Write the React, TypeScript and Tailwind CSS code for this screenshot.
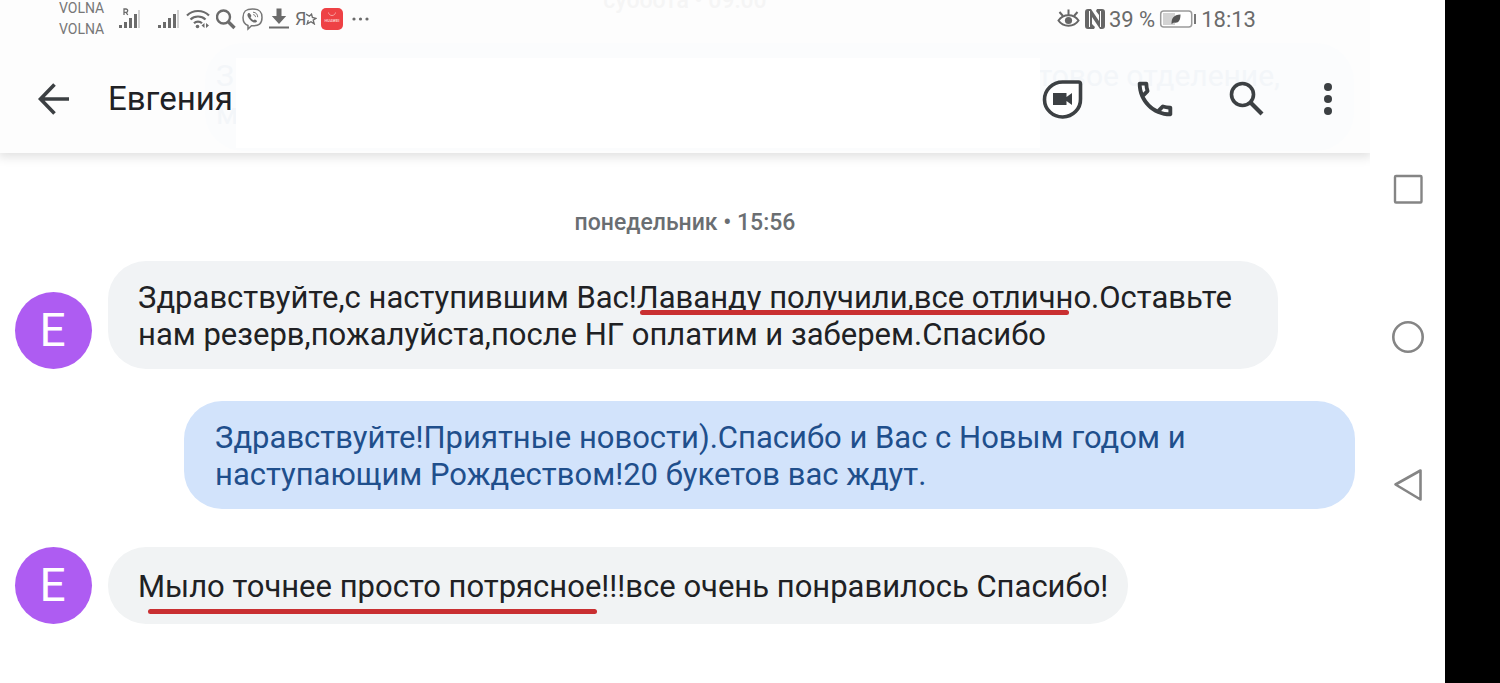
import type { ReactNode } from 'react';

function Signal({ roaming }: { roaming?: boolean }) {
  return (
    <svg className="h-6 w-[22px] shrink-0" viewBox="0 0 22 24" fill="#6b6b6b">
      <path d="M0 18h3v3H0zM5 15h3v6H5zM10 11h3v10h-3zM15 7h3v14h-3z" />
      <path d="M19 3h2v18h-2z" fill="#d2d2d2" />
      {roaming && <path d="M5 8V2h2a1.600 1.600 0 0 1 0 3.400H5M7 5.400L8.800 8" fill="none" stroke="#6b6b6b" strokeWidth="1.300" />}
    </svg>
  );
}

function Avatar() {
  return (
    <div className="flex size-[77px] shrink-0 items-center justify-center rounded-full bg-[#ae5cf2] pr-[2px] text-[46px] font-normal text-white">
      Е
    </div>
  );
}

function Marked({ children, line }: { children: ReactNode; line: string }) {
  return (
    <mark className="relative bg-transparent text-inherit">
      {children}
      <span className={`absolute h-[5px] rounded-full bg-[#c92f31] ${line}`} />
    </mark>
  );
}

function StatusBar() {
  return (
    <div className="flex h-[38px] items-center justify-between pr-[114px] pl-[59px] text-[#6b6b6b]">
      <div className="flex items-center gap-[6px]">
        <div className="w-[54px] text-sm leading-[21px] text-[#777]">
          <p>VOLNA</p>
          <p>VOLNA</p>
        </div>
        <div className="w-[33px]">
          <Signal roaming />
        </div>
        <Signal />
        <svg className="h-6 w-6" viewBox="0 0 24 24" fill="none" stroke="#6b6b6b" strokeWidth="2.200">
          <path d="M1 8.500C7 2.500 17 2.500 23 8.500M4.500 12.500c4-4 11-4 15 0M8 16.300c2.200-2.200 5.800-2.200 8 0" />
          <circle cx="11.500" cy="19.500" r="1.800" fill="#6b6b6b" stroke="none" />
          <path d="M18.500 16v5l-3-2.500zM20 16v5l3-2.500z" fill="#6b6b6b" stroke="none" />
        </svg>
        <svg className="h-6 w-5" viewBox="0 0 20 24" fill="none" stroke="#6b6b6b">
          <circle cx="7.500" cy="10" r="6.500" strokeWidth="2.400" />
          <path d="M12.500 15l6 6" strokeWidth="3.400" />
        </svg>
        <svg className="h-6 w-[21px]" viewBox="0 0 21 24" fill="none" stroke="#777" strokeWidth="1.500">
          <path d="M10.500 2C3.500 2 1 4.500 1 10.500c0 4.500 1.500 7 5 8V22l3.500-3.200c7.500.2 10.500-2 10.500-8.300C20 4.500 17.500 2 10.500 2z" />
          <path d="M6 6.500c-1.500 1.500 0 4 2 6.200s4.800 3.800 6.500 2.300c.8-.8.500-1.200-.2-1.800-1.300-1-1.700-.9-2.600 0-1.300-.3-2.700-1.800-3.100-3 .9-.9 1-1.300.1-2.600C7.900 6.300 6.900 5.600 6 6.500z" fill="#6b6b6b" stroke="none" />
          <path d="M11 5.200c3 .2 4.600 2 4.700 5M11.200 7.600c1.500.2 2.200 1 2.300 2.500" strokeWidth="1" />
        </svg>
        <svg className="h-6 w-5" viewBox="0 0 20 24" fill="#6b6b6b">
          <path d="M7.500 1.500h5v7.500h4.700L10 17 2.800 9h4.700zM0 19.500h20v2H0z" />
        </svg>
        <div className="flex w-5 items-center">
          <span className="text-lg leading-6">Я</span>
          <svg className="-ml-px size-3 shrink-0" viewBox="0 0 11 11" fill="none" stroke="#6b6b6b" strokeWidth="1.200">
            <path d="M1 1l3 2 2-2 .8 3L10 5 7.500 6.500 8.500 10 5.500 8 2 10l1-3.500" />
          </svg>
        </div>
        <svg className="h-[22px] w-[22px]" viewBox="0 0 22 22">
          <rect width="22" height="22" rx="5" fill="#ee4145" />
          <path d="M7.500 4.500c.5 4 6.500 4 7 0" fill="none" stroke="#f8a0a0" strokeWidth="1" />
          <text x="11" y="14" textAnchor="middle" fontSize="4" fontWeight="700" fill="#fbc4c4">HUAWEI</text>
        </svg>
        <svg className="h-6 w-[22px]" viewBox="0 0 22 24" fill="#6b6b6b">
          <circle cx="5" cy="12" r="1.600" />
          <circle cx="11.500" cy="12" r="1.600" />
          <circle cx="18" cy="12" r="1.600" />
        </svg>
      </div>

      <div className="flex items-center gap-1 text-[22px]">
        <svg className="h-6 w-6" viewBox="0 0 24 24" fill="none" stroke="#666" strokeWidth="2">
          <path d="M1.500 13.500C6 6.500 17 6.500 21.500 13.500 17 20.500 6 20.500 1.500 13.500z" />
          <circle cx="11.500" cy="13.500" r="3.600" fill="#666" stroke="none" />
          <path d="M11.500 8V2.500M6 9L2.500 5M17 9l3.500-4" />
        </svg>
        <svg className="h-6 w-5" viewBox="0 0 20 24">
          <path d="M3 2h3l8 12V8l-3-4 1-2h5c2 0 3 1 3 3v14c0 2-1 3-3 3h-2L7 10v7l3 3-1 2H3c-2 0-3-1-3-3V5c0-2 1-3 3-3z" fill="#666" />
          <path d="M4.500 4v16M15.500 4v16" stroke="#fff" strokeWidth="1" />
        </svg>
        <span>39 %</span>
        <svg className="h-6 w-[38px]" viewBox="0 0 38 24">
          <rect x="1.700" y="4" width="31" height="16" rx="3" fill="#fff" stroke="#9a9a9a" strokeWidth="1.500" />
          <path d="M4 6h12v12H4z" fill="#d3d3d3" />
          <path d="M12.500 17c0-6 2-9 9-9.500 0 6-2 9-6.500 8z" fill="#555" />
          <path d="M35 7h2v10h-2z" fill="#777" />
        </svg>
        <span>18:13</span>
      </div>
    </div>
  );
}

function Header() {
  return (
    <header className="relative h-[153px] bg-[#fdfdfd] text-[#3c4043] shadow-[0_2px_10px_2px_rgba(0,0,0,0.12)] [clip-path:inset(0_0_-20px_0)]">
      {/* conversation that shows through the bar */}
      <div aria-hidden="true" className="absolute inset-0 overflow-hidden text-3xl leading-[38px]">
        <p className="-mt-[11px] text-center text-[23px] leading-6 font-medium text-[#f5f5f5]">суббота • 09:00</p>
        <div className="mt-[30px] mr-4 ml-[205px] flex h-[108px] justify-between rounded-[38px] bg-[#fbfcfd] pt-[14px] pr-[74px] pl-[11px] text-[#f3f6f9]">
          <p>З<br />м</p>
          <p>товое отделение,</p>
        </div>
      </div>

      <div className="relative">
        <StatusBar />
        <div className="flex h-[115px] items-center pt-[7px] pr-[30px] pl-[31px]">
          <button type="button" aria-label="Назад" className="mr-[31px]">
            <svg className="size-[46px]" viewBox="0 0 46 46" fill="none" stroke="#3c4043" strokeWidth="3.600">
              <path d="M38 23H10M23.500 8.500L9.500 23l14 14.500" />
            </svg>
          </button>
          <h1 className="text-[33px] leading-10 text-[#202124]">Евгения</h1>
          <div className="mt-2 ml-[3px] h-[90px] flex-1 bg-white" />
          <div className="flex gap-[46px]">
            <button type="button" aria-label="Видеовызов">
              <svg className="size-[46px]" viewBox="0 0 46 46">
                <path d="M22.500 6H38.500q2 0 2 2v15A18 17.500 0 1 1 22.500 6z" fill="#fff" stroke="#3c4043" strokeWidth="3.600" />
                <path d="M13 17h13.500v4l5.500-4v12l-5.500-4v4H13z" fill="#3c4043" />
              </svg>
            </button>
            <button type="button" aria-label="Позвонить">
              <svg className="size-[46px]" viewBox="0 0 24 24" fill="#3c4043">
                <path d="M6.540 5c.06.89.21 1.760.45 2.590l-1.200 1.200c-.41-1.200-.67-2.470-.76-3.790h1.510m9.860 12.020c.85.24 1.720.39 2.600.45v1.490c-1.320-.09-2.590-.35-3.800-.75l1.200-1.190M7.500 3H4c-.55 0-1 .45-1 1 0 9.390 7.610 17 17 17 .55 0 1-.45 1-1v-3.490c0-.55-.45-1-1-1-1.240 0-2.450-.2-3.570-.57-.1-.04-.21-.05-.31-.05-.26 0-.51.1-.71.29l-2.200 2.200c-2.830-1.450-5.150-3.760-6.590-6.590l2.200-2.200c.28-.28.36-.67.25-1.020C8.700 6.450 8.500 5.250 8.500 4c0-.55-.45-1-1-1z" />
              </svg>
            </button>
            <button type="button" aria-label="Поиск">
              <svg className="size-[46px]" viewBox="0 0 46 46" fill="none" stroke="#3c4043">
                <circle cx="18.500" cy="18.500" r="11" strokeWidth="3.600" />
                <path d="M26.500 26.500L38 38" strokeWidth="4.200" />
              </svg>
            </button>
            <button type="button" aria-label="Ещё">
              <svg className="h-[46px] w-6" viewBox="0 0 24 46" fill="#3c4043">
                <circle cx="12" cy="11" r="4" />
                <circle cx="12" cy="23" r="4" />
                <circle cx="12" cy="35" r="4" />
              </svg>
            </button>
          </div>
        </div>
      </div>
    </header>
  );
}

function SystemNav() {
  return (
    <nav className="flex w-[75px] shrink-0 flex-col items-center gap-[114px] pt-[172px]">
      <button type="button" aria-label="Недавние">
        <svg className="size-[34px]" viewBox="0 0 34 34" fill="none" stroke="#858585" strokeWidth="2.400">
          <rect x="4" y="4" width="26.500" height="26.500" rx="1" />
        </svg>
      </button>
      <button type="button" aria-label="Домой">
        <svg className="size-[34px]" viewBox="0 0 34 34" fill="none" stroke="#858585" strokeWidth="2.600">
          <circle cx="17" cy="17" r="14.700" />
        </svg>
      </button>
      <button type="button" aria-label="Назад">
        <svg className="size-[34px]" viewBox="0 0 34 34" fill="none" stroke="#858585" strokeWidth="2.600" strokeLinejoin="round">
          <path d="M4.500 16.500L29.500 2.500v29z" />
        </svg>
      </button>
    </nav>
  );
}

export default function App() {
  return (
    <div className="flex min-h-screen bg-white font-[Roboto,'Liberation_Sans',sans-serif]">
      <div className="min-w-0 flex-1">
        <Header />

        <main className="px-[15px] pt-14 text-[31px] leading-[37px] text-[#202124]">
          <p className="mb-6 text-center text-[23px] leading-7 font-medium text-[#6a6e72]">понедельник • 15:56</p>

          <div className="flex items-end gap-4">
            <Avatar />
            <div className="mr-[77px] flex-1 rounded-[38px] bg-[#f1f3f5] px-[30px] pt-[18px] pb-4">
              Здравствуйте,с наступившим Вас!
              <Marked line="bottom-px left-[3px] right-[22px]">Лаванду получили,все отлично</Marked>
              .Оставьте нам резерв,пожалуйста,после НГ оплатим и заберем.Спасибо
            </div>
          </div>

          <div className="mt-8 ml-[169px] rounded-[38px] bg-[#d2e3fb] px-[31px] pt-[18px] pb-4 text-[#1f4f8c]">
            Здравствуйте!Приятные новости).Спасибо и Вас с Новым годом и наступающим Рождеством!20 букетов вас ждут.
          </div>

          <div className="mt-[38px] flex items-end gap-4">
            <Avatar />
            <div className="rounded-[38px] bg-[#f1f3f4] pt-[21px] pr-5 pb-[19px] pl-[30px]">
              <Marked line="-bottom-[9px] left-[10px] right-1">Мыло точнее просто потрясное</Marked>
              !!!все очень понравилось Спасибо!
            </div>
          </div>
        </main>
      </div>

      <SystemNav />
      <div className="w-[55px] shrink-0 bg-black" />
    </div>
  );
}
